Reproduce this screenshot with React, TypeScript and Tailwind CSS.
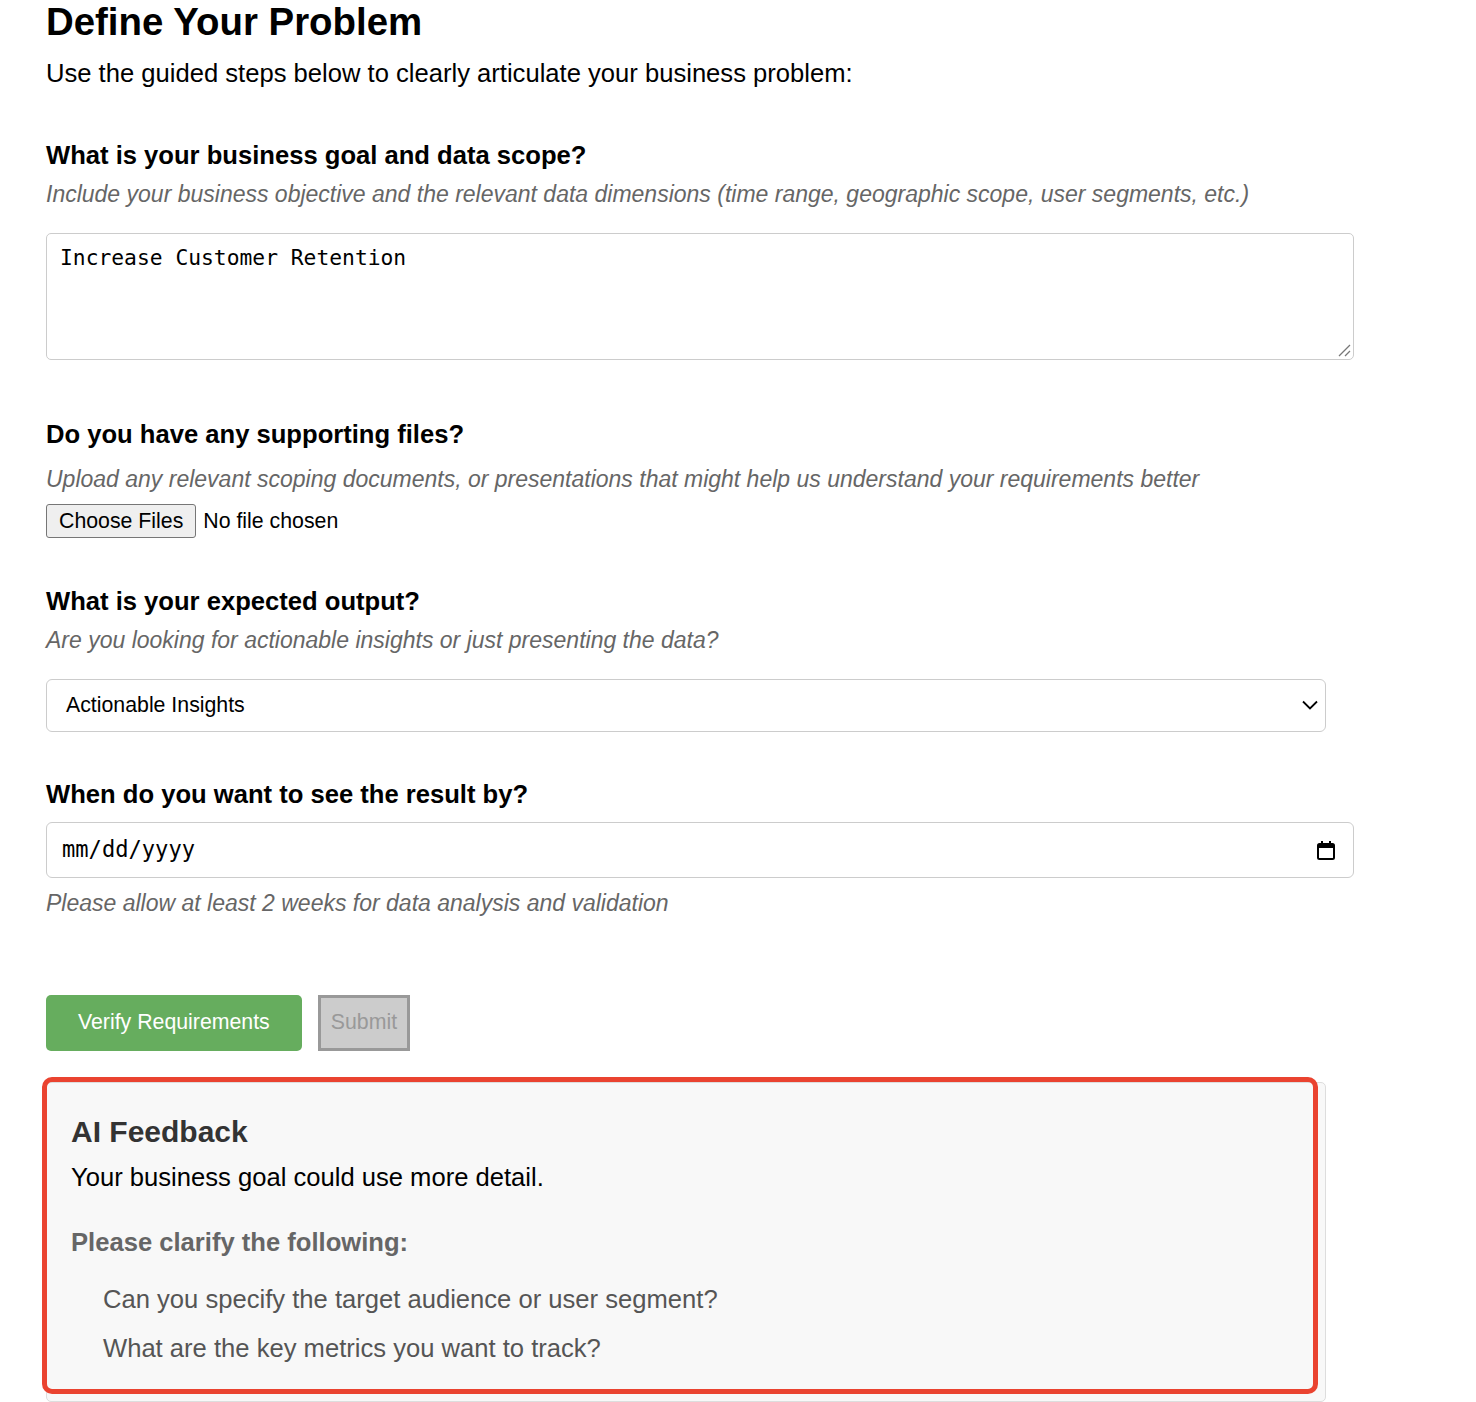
const sans = { fontFamily: '"Liberation Sans", Arial, sans-serif' };
const mono = { fontFamily: '"DejaVu Sans Mono", "Liberation Mono", monospace' };

function Section({
  title,
  hint,
  hintGap = "mt-[9px]",
  children,
}: {
  title: string;
  hint?: string;
  hintGap?: string;
  children?: React.ReactNode;
}) {
  return (
    <div className="flex flex-col">
      <h3 className="text-[25.6px] leading-[30px] font-bold text-black">{title}</h3>
      {hint && <p className={`${hintGap} text-[23px] leading-[30px] italic text-[#666]`}>{hint}</p>}
      {children}
    </div>
  );
}

export default function App() {
  return (
    <div className="min-h-screen bg-white pl-[46px] pr-[122px] pb-[2px] text-black" style={sans}>
      <h1 className="text-[38.4px] leading-[44px] font-bold">Define Your Problem</h1>
      <p className="mt-[14px] text-[25.6px] leading-[30px]">
        Use the guided steps below to clearly articulate your business problem:
      </p>

      <div className="mt-[52px] flex flex-col">
        <Section
          title="What is your business goal and data scope?"
          hint="Include your business objective and the relevant data dimensions (time range, geographic scope, user segments, etc.)"
        >
          <div className="relative mt-[24px]">
            <textarea
              defaultValue="Increase Customer Retention"
              className="block h-[127px] w-full resize-none rounded-[5px] border border-[#ccc] px-[13px] py-[11px] text-[21.3px] leading-[26px] outline-none"
              style={mono}
            />
            {/* resize grip */}
            <svg className="pointer-events-none absolute right-[3px] bottom-[3px]" width="14" height="14" viewBox="0 0 14 14">
              <path d="M2 13 L13 2 M8 13 L13 8" stroke="#777" strokeWidth="1.3" />
            </svg>
          </div>
        </Section>

        <div className="mt-[59px]">
          <Section
            title="Do you have any supporting files?"
            hint="Upload any relevant scoping documents, or presentations that might help us understand your requirements better"
            hintGap="mt-[15px]"
          >
            <div className="mt-[10px] flex items-center gap-[7px]">
              <button className="h-[34px] rounded-[3px] border border-[#767676] bg-[#efefef] px-[12px] text-[21.3px] leading-[30px] text-black">
                Choose Files
              </button>
              <span className="text-[21.3px] leading-[30px]">No file chosen</span>
            </div>
          </Section>
        </div>

        <div className="mt-[48px]">
          <Section title="What is your expected output?" hint="Are you looking for actionable insights or just presenting the data?">
            <div className="mt-[24px] mr-[28px] flex h-[53px] items-center justify-between rounded-[6px] border border-[#ccc] pl-[19px] pr-[7px]">
              <span className="text-[21.3px]">Actionable Insights</span>
              <svg width="16" height="11" viewBox="0 0 16 11" fill="none">
                <path d="M1 1.5 L8 8.5 L15 1.5" stroke="black" strokeWidth="1.8" />
              </svg>
            </div>
          </Section>
        </div>

        <div className="mt-[47px]">
          <Section title="When do you want to see the result by?">
            <div className="mt-[13px] flex h-[56px] items-center justify-between rounded-[6px] border border-[#ccc] pl-[15px] pr-[18px]">
              <span className="text-[22.1px] text-black" style={mono}>
                mm/dd/yyyy
              </span>
              <svg width="18" height="19" viewBox="0 0 18 19" fill="none">
                <rect x="1" y="3" width="16" height="15" rx="1.5" stroke="black" strokeWidth="2" />
                <rect x="1" y="3" width="16" height="4" fill="black" />
                <rect x="4" y="0" width="2" height="4" fill="black" />
                <rect x="12" y="0" width="2" height="4" fill="black" />
              </svg>
            </div>
            <p className="mt-[10px] text-[23px] leading-[30px] italic text-[#666]">
              Please allow at least 2 weeks for data analysis and validation
            </p>
          </Section>
        </div>

        <div className="mt-[77px] flex items-center gap-[16px]">
          <button className="h-[56px] rounded-[5px] bg-[#66ad5e] px-[32px] text-[21.3px] text-white">
            Verify Requirements
          </button>
          <button
            disabled
            className="h-[56px] border-[3px] border-[#999] bg-[#ccc] px-[10px] text-[21.3px] text-[#999]"
          >
            Submit
          </button>
        </div>

        <div className="relative mt-[31px] mr-[28px]">
          <div className="flex flex-col rounded-[5px] border border-[#ddd] bg-[#f8f8f8] px-[24px] pt-[31px] pb-[38px]">
            <h3 className="text-[30px] leading-[36px] font-bold text-[#333]">AI Feedback</h3>
            <p className="mt-[12px] text-[25.6px] leading-[30px] text-black">Your business goal could use more detail.</p>
            <h4 className="mt-[35px] text-[25.6px] leading-[30px] font-bold text-[#666]">Please clarify the following:</h4>
            <ul className="mt-[27px] flex flex-col gap-[19px] pl-[32px]">
              <li className="text-[25.6px] leading-[30px] text-[#555]">Can you specify the target audience or user segment?</li>
              <li className="text-[25.6px] leading-[30px] text-[#555]">What are the key metrics you want to track?</li>
            </ul>
          </div>
          <div className="pointer-events-none absolute left-[-4px] top-[-5px] right-[8px] bottom-[8px] rounded-[10px] border-[5px] border-[#ea4330]" />
        </div>
      </div>
    </div>
  );
}
